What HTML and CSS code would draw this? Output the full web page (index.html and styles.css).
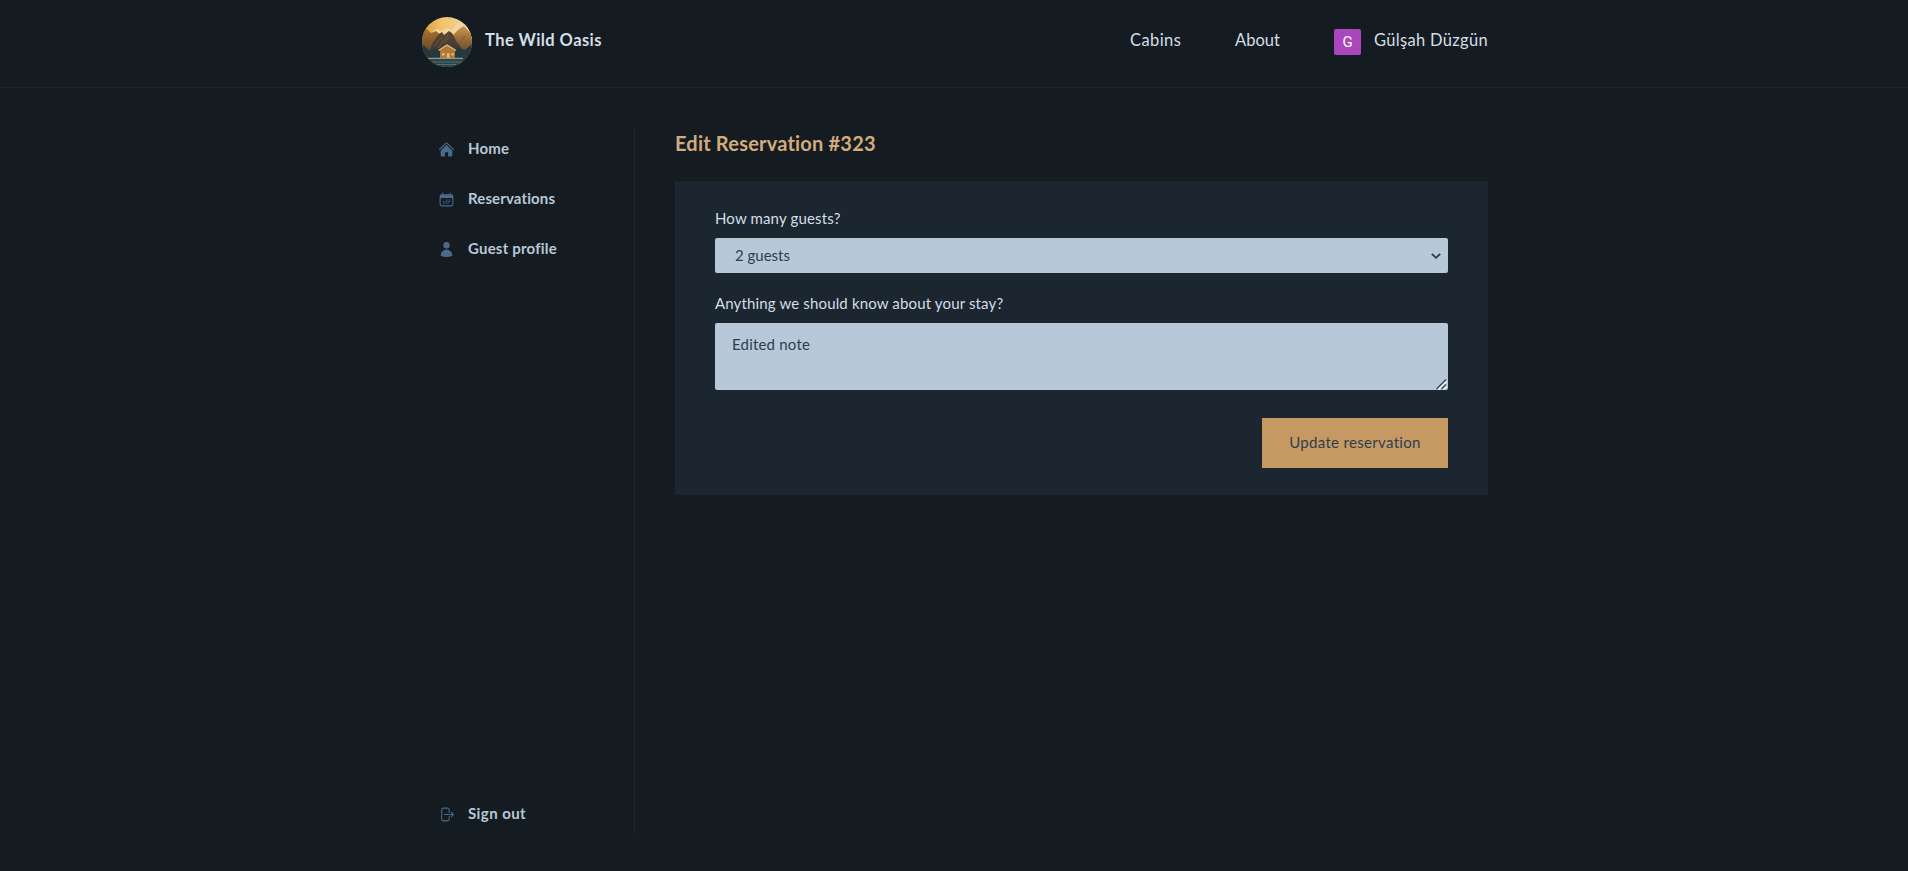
FILE: index.html
```html
<!DOCTYPE html>
<html lang="en">
<head>
<meta charset="utf-8">
<title>Edit Reservation // The Wild Oasis</title>
<link rel="stylesheet" href="styles.css">
</head>
<body>
<header class="header">
  <div class="header-inner">
    <a class="brand">
      <svg class="logo" viewBox="0 0 50 50" aria-hidden="true">
        <defs>
          <clipPath id="disc"><circle cx="25" cy="25" r="25"/></clipPath>
          <linearGradient id="sky" x1="0" y1="0" x2="1" y2="0"><stop offset="0" stop-color="#d99a3e"/><stop offset=".4" stop-color="#f2c368"/><stop offset=".75" stop-color="#f0cf92"/><stop offset="1" stop-color="#d9a65a"/></linearGradient>
          <linearGradient id="ridge" x1="0" y1="0" x2="0" y2="1"><stop offset="0" stop-color="#ad6f2e"/><stop offset="1" stop-color="#4a3c2b"/></linearGradient>
          <linearGradient id="ridgeRight" x1="0" y1="0" x2="0" y2="1"><stop offset="0" stop-color="#cf9449"/><stop offset=".5" stop-color="#8a6038"/><stop offset="1" stop-color="#343b38"/></linearGradient>
          <linearGradient id="peak" x1="0" y1="0" x2="0" y2="1"><stop offset="0" stop-color="#5d4632"/><stop offset="1" stop-color="#283434"/></linearGradient>
        </defs>
        <g clip-path="url(#disc)">
          <rect width="50" height="50" fill="url(#sky)"/>
          <path d="M10 15l5-3 4 2 6-3 5 2 5-6 4-3 3 3 8 7v8H10z" fill="#f1d6a0"/>
          <path d="M0 14l5-2 4 4 5-2 6 5v23H0z" fill="url(#ridge)"/>
          <path d="M28 21l5-5 4-4 5-3 8 9v26H28z" fill="url(#ridgeRight)"/>
          <path d="M7 35l4-10 6-8 3-2 2 3 5-4 3 2 5 9 8 11v8H5z" fill="url(#peak)"/>
          <path d="M12 29l8-9m-4 11l10-13m-4 8l5-6m9 7l7-8" stroke="#7a5838" stroke-width="1"/>
          <path d="M0 27l8 7 8-2 19-1 8 2 7-6v24H0z" fill="#26383b"/>
          <path d="M18 33l7-5 8 5v8H18z" fill="#b0763a"/>
          <path d="M16.500 33.500L25 28l9 5.500" fill="none" stroke="#e6bd86" stroke-width="1.300"/>
          <path d="M20 36h2.500v2.500H20zm5 0h2.500v5H25zm4.500 0h2v2.500h-2z" fill="#f0b868"/>
          <rect y="42" width="50" height="8" fill="#2b4548"/>
          <path d="M6 41.300h35" stroke="#94978a" stroke-width="1.300"/>
          <path d="M10 45h29M14 47.500h20" stroke="#5e7774" stroke-width=".8"/>
        </g>
      </svg>
      <span class="brand-name">The Wild Oasis</span>
    </a>
    <nav class="top-nav">
      <a class="nav-cabins">Cabins</a>
      <a class="nav-about">About</a>
      <a class="account"><span class="avatar">G</span><span class="account-name">Gülşah Düzgün</span></a>
    </nav>
  </div>
</header>
<div class="layout">
  <nav class="sidebar">
    <a class="side-link">
      <svg class="icon" viewBox="0 0 24 24" fill="currentColor"><path d="M11.470 3.841a.75.75 0 0 1 1.060 0l8.690 8.690a.75.75 0 1 0 1.060-1.061l-8.689-8.690a2.250 2.250 0 0 0-3.182 0l-8.690 8.690a.75.75 0 1 0 1.061 1.060l8.690-8.689Z"/><path d="m12 5.432 8.159 8.159c.03.03.06.058.091.086v6.198c0 1.035-.84 1.875-1.875 1.875H15a.75.75 0 0 1-.75-.75v-4.500a.75.75 0 0 0-.75-.75h-3a.75.75 0 0 0-.75.75V21a.75.75 0 0 1-.75.75H5.625a1.875 1.875 0 0 1-1.875-1.875v-6.198a2.290 2.290 0 0 0 .091-.086L12 5.432Z"/></svg>
      <span class="t-home">Home</span>
    </a>
    <a class="side-link">
      <svg class="icon" viewBox="0 0 24 24" fill="currentColor"><path d="M12.750 12.750a.75.75 0 1 1-1.500 0 .75.75 0 0 1 1.500 0ZM7.500 15.750a.75.75 0 1 0 0-1.500.75.75 0 0 0 0 1.500ZM8.250 17.250a.75.75 0 1 1-1.500 0 .75.75 0 0 1 1.500 0ZM9.750 15.750a.75.75 0 1 0 0-1.500.75.75 0 0 0 0 1.500ZM10.500 17.250a.75.75 0 1 1-1.500 0 .75.75 0 0 1 1.500 0ZM12 15.750a.75.75 0 1 0 0-1.500.75.75 0 0 0 0 1.500ZM12.750 17.250a.75.75 0 1 1-1.500 0 .75.75 0 0 1 1.500 0ZM14.250 15.750a.75.75 0 1 0 0-1.500.75.75 0 0 0 0 1.500ZM15 17.250a.75.75 0 1 1-1.500 0 .75.75 0 0 1 1.500 0ZM16.500 15.750a.75.75 0 1 0 0-1.500.75.75 0 0 0 0 1.500ZM15 12.750a.75.75 0 1 1-1.500 0 .75.75 0 0 1 1.500 0ZM16.500 13.500a.75.75 0 1 0 0-1.500.75.75 0 0 0 0 1.500Z"/><path fill-rule="evenodd" d="M6.750 2.250A.75.75 0 0 1 7.500 3v1.500h9V3A.75.75 0 0 1 18 3v1.500h.75a3 3 0 0 1 3 3v11.250a3 3 0 0 1-3 3H5.250a3 3 0 0 1-3-3V7.500a3 3 0 0 1 3-3H6V3a.75.75 0 0 1 .75-.75Zm13.500 9a1.500 1.500 0 0 0-1.500-1.500H5.250a1.500 1.500 0 0 0-1.500 1.500v7.500a1.500 1.500 0 0 0 1.500 1.500h13.500a1.500 1.500 0 0 0 1.500-1.500v-7.500Z"/></svg>
      <span class="t-reservations">Reservations</span>
    </a>
    <a class="side-link">
      <svg class="icon" viewBox="0 0 24 24" fill="currentColor"><path fill-rule="evenodd" d="M7.500 6a4.500 4.500 0 1 1 9 0 4.500 4.500 0 0 1-9 0ZM3.751 20.105a8.250 8.250 0 0 1 16.498 0 .75.75 0 0 1-.437.695A18.683 18.683 0 0 1 12 22.500c-2.786 0-5.433-.608-7.812-1.700a.75.75 0 0 1-.437-.695Z"/></svg>
      <span class="t-profile">Guest profile</span>
    </a>
    <a class="side-link sign-out">
      <svg class="icon" viewBox="0 0 24 24" fill="none" stroke="currentColor" stroke-width="1.500" stroke-linecap="round" stroke-linejoin="round"><path d="M15.750 9V5.250A2.250 2.250 0 0 0 13.500 3h-6a2.250 2.250 0 0 0-2.250 2.250v13.500A2.250 2.250 0 0 0 7.500 21h6a2.250 2.250 0 0 0 2.250-2.250V15m3 0 3-3m0 0-3-3m3 3H9"/></svg>
      <span class="t-signout">Sign out</span>
    </a>
  </nav>
  <main class="main">
    <h2 class="title">Edit Reservation #323</h2>
    <form class="form">
      <label class="label" for="guests">How many guests?</label>
      <div class="field field-select">
        <select class="select" id="guests"><option>2 guests</option></select>
        <svg class="chevron" viewBox="0 0 10 6" aria-hidden="true"><path d="M.8.8L5 4.800 9.200.8" fill="none" stroke="#2d3e50" stroke-width="1.800"/></svg>
      </div>
      <label class="label" for="note">Anything we should know about your stay?</label>
      <div class="field">
        <textarea class="textarea" id="note">Edited note</textarea>
        <svg class="grip" viewBox="0 0 11 11" aria-hidden="true"><path d="M2.500 10.500l8-8M7.500 10.500l3-3" stroke="#fff" stroke-width="1.200"/><path d="M.5 10L10 .5M5.500 10L10 5.500" stroke="#35414d" stroke-width="1.200"/></svg>
      </div>
      <div class="actions"><button class="button" type="button">Update reservation</button></div>
    </form>
  </main>
</div>
</body>
</html>
```
FILE: styles.css
```css
* { box-sizing: border-box; }

body {
  margin: 0;
  height: 871px;
  overflow: hidden;
  background: #141c22;
  color: #d4dee7;
  font-family: Lato, "Liberation Sans", sans-serif;
  font-size: 15px;
  line-height: 24px;
  font-variant-ligatures: none;
}

/* Header */
.header { height: 88px; border-bottom: 1px solid #1b2631; }
.header-inner {
  display: flex;
  justify-content: space-between;
  width: 1066px;
  margin-left: 422px;
  padding-top: 17px;
}
.brand { display: flex; gap: 13px; }
.logo { width: 50px; height: 50px; }
.brand-name, .top-nav { padding-top: 11px; font-size: 16.5px; line-height: 24px; white-space: nowrap; }
.brand-name { font-weight: 700; letter-spacing: .43px; }
.top-nav { display: flex; }
.nav-cabins { width: 105px; letter-spacing: .4px; }
.nav-about { width: 99px; }
.account { display: flex; gap: 13px; width: 154px; }
.account-name { letter-spacing: .32px; }
.avatar {
  width: 27px;
  height: 26px;
  margin-top: 1px;
  border-radius: 2px;
  background: #ab47bc;
  color: #fff;
  font: 400 15px/27px Roboto, sans-serif;
  text-align: center;
}

/* Page columns */
.layout {
  display: grid;
  grid-template-columns: 213px 813px;
  gap: 40px;
  height: 707px;
  margin: 40px 0 0 422px;
}

.sidebar {
  display: flex;
  flex-direction: column;
  gap: 8px;
  border-right: 1px solid #1b2631;
}
.side-link {
  display: flex;
  align-items: center;
  gap: 13px;
  height: 42px;
  padding-left: 16px;
  color: #b7c8d7;
  font-weight: 700;
  white-space: nowrap;
}
.side-link span { padding-bottom: 3px; }
.t-home { letter-spacing: .2px; }
.t-reservations { letter-spacing: .12px; }
.t-profile { letter-spacing: .2px; }
.t-signout { letter-spacing: .42px; }
.sign-out { margin-top: auto; }
.icon { width: 17px; height: 17px; color: #4a6a8b; }

/* Main content */
.title {
  margin: 0;
  padding-top: 2px;
  height: 53px;
  color: #d3ab7c;
  font-size: 20px;
  font-weight: 700;
  line-height: 26px;
  letter-spacing: .2px;
}
.form {
  display: flex;
  flex-direction: column;
  height: 314px;
  padding: 24px 40px 27px;
  background: #1b2630;
}
.label { height: 33px; padding-top: 1px; line-height: 25px; letter-spacing: .15px; }
.field { position: relative; }
.field-select { margin-bottom: 17px; }
.select, .textarea {
  display: block;
  width: 100%;
  margin: 0;
  border: 0;
  border-radius: 2px;
  background: #b7c8d9;
  color: #2d3e50;
  font-family: inherit;
  font-size: 15px;
}
.select { appearance: none; height: 35px; padding: 0 20px 1px; }
.textarea { height: 67px; padding: 9px 17px; line-height: 24px; letter-spacing: .2px; resize: none; }
.chevron { position: absolute; top: 15px; right: 7px; width: 10px; height: 6px; }
.grip { position: absolute; right: 1px; bottom: 0; width: 11px; height: 11px; }
.actions { display: flex; justify-content: flex-end; margin-top: 28px; }
.button {
  width: 186px;
  height: 50px;
  padding: 0 0 3px;
  border: 0;
  background: #c69963;
  color: #2d3e50;
  font-family: inherit;
  font-size: 15px;
  letter-spacing: .32px;
  white-space: nowrap;
}
```
